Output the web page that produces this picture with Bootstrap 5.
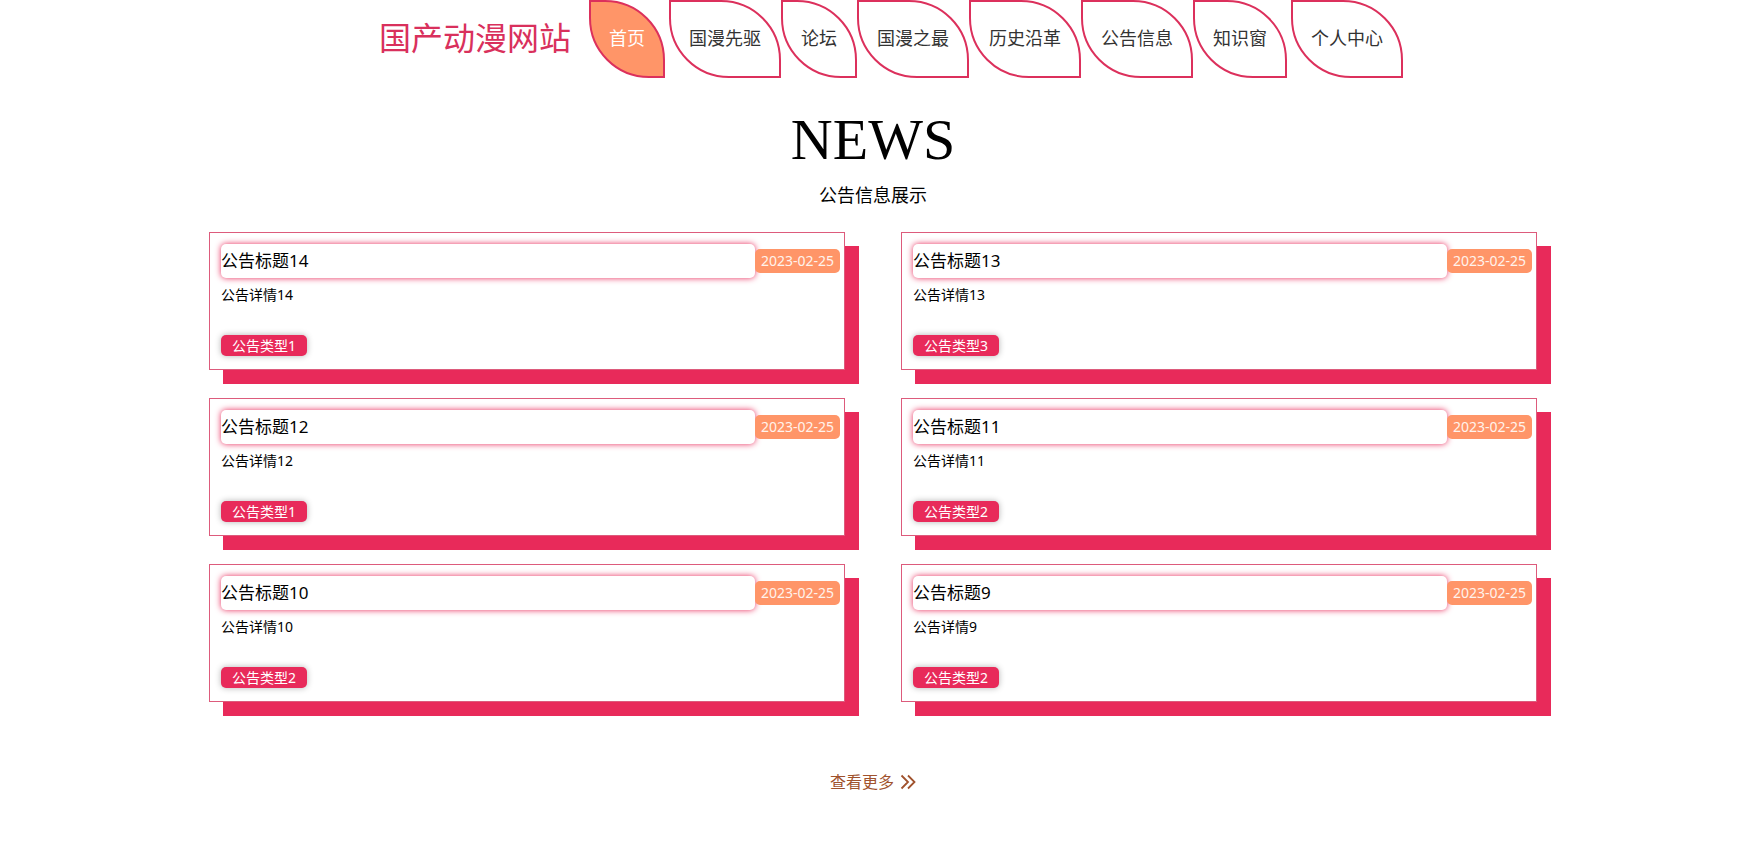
<!DOCTYPE html>
<html lang="zh-CN">
<head>
<meta charset="utf-8">
<meta name="viewport" content="width=device-width, initial-scale=1">
<title>国产动漫网站</title>
<link rel="stylesheet" href="https://cdn.jsdelivr.net/npm/bootstrap@5.3.0/dist/css/bootstrap.min.css">
<style>
:root { --rose: #e82a5a; --peach: #ff9568; }
body { font-family: "Noto Sans", "Noto Sans CJK SC", sans-serif; color: #000; background: #fff; }
.page { padding-right: 17px; }
.brand { color: #d9305c; font-size: 32px; line-height: 76px; padding: 0 18px 0 36px; }
.leaf { border: 2px solid #dc305c; border-radius: 0 60px 0 60px; color: #333; font-size: 18px; line-height: 72px; padding: 0 18px 2px; white-space: nowrap; }
.leaf.active { background: var(--peach); color: #fff; }
.leaf:hover { background: var(--peach); color: #fff; }
.news-head { padding-top: 27px; }
.news-head h1 { font-family: "Liberation Serif", serif; font-size: 58px; line-height: 70px; font-weight: 400; margin-bottom: 6px; }
.news-head p { font-size: 18px; line-height: 28px; }
.news-grid { max-width: 1328px; column-gap: 56px; row-gap: 28px; display: grid; grid-template-columns: repeat(auto-fit, minmax(min(100%, 440px), 1fr)); margin-top: 23px; }
.notice { color: #000; background: #fff; border: 1px solid #dd5b7c; box-shadow: 14px 14px 0 var(--rose); padding: 11px 4px 13px 11px; }
.notice-title { font-size: 17px; line-height: 34px; border-radius: 5px; box-shadow: 0 0 6px var(--rose); }
.notice-date { font-size: 14px; line-height: 24px; padding: 0 6px; border-radius: 5px; background: var(--peach); color: #fff3ec; }
.notice-text { font-size: 14px; line-height: 20px; margin: 7px 0 30px; }
.notice-kind { font-size: 14px; line-height: 21px; padding: 0 11px; border-radius: 5px; background: var(--rose); color: #fff; box-shadow: 0 0 6px rgba(0, 0, 0, .3); }
.more { color: #a0522d; font-size: 16px; line-height: 24px; margin: 68px 0 40px; gap: 6px; }
</style>
</head>
<body>
<div class="page">
  <header>
    <nav class="d-flex flex-wrap justify-content-center">
      <a class="brand text-decoration-none" href="#">国产动漫网站</a>
      <a class="leaf active text-decoration-none me-1" href="#" aria-current="page">首页</a>
      <a class="leaf text-decoration-none" href="#">国漫先驱</a>
      <a class="leaf text-decoration-none" href="#">论坛</a>
      <a class="leaf text-decoration-none" href="#">国漫之最</a>
      <a class="leaf text-decoration-none" href="#">历史沿革</a>
      <a class="leaf text-decoration-none" href="#">公告信息</a>
      <a class="leaf text-decoration-none me-1" href="#">知识窗</a>
      <a class="leaf text-decoration-none" href="#">个人中心</a>
    </nav>
  </header>
  <main>
    <div class="news-head text-center">
      <h1>NEWS</h1>
      <p class="mb-0">公告信息展示</p>
    </div>
    <div class="news-grid mx-auto">
      <a class="notice d-block text-decoration-none" href="#">
        <div class="d-flex align-items-center"><div class="notice-title flex-grow-1">公告标题14</div><div class="notice-date">2023-02-25</div></div>
        <p class="notice-text">公告详情14</p>
        <div class="d-flex"><span class="notice-kind">公告类型1</span></div>
      </a>
      <a class="notice d-block text-decoration-none" href="#">
        <div class="d-flex align-items-center"><div class="notice-title flex-grow-1">公告标题13</div><div class="notice-date">2023-02-25</div></div>
        <p class="notice-text">公告详情13</p>
        <div class="d-flex"><span class="notice-kind">公告类型3</span></div>
      </a>
      <a class="notice d-block text-decoration-none" href="#">
        <div class="d-flex align-items-center"><div class="notice-title flex-grow-1">公告标题12</div><div class="notice-date">2023-02-25</div></div>
        <p class="notice-text">公告详情12</p>
        <div class="d-flex"><span class="notice-kind">公告类型1</span></div>
      </a>
      <a class="notice d-block text-decoration-none" href="#">
        <div class="d-flex align-items-center"><div class="notice-title flex-grow-1">公告标题11</div><div class="notice-date">2023-02-25</div></div>
        <p class="notice-text">公告详情11</p>
        <div class="d-flex"><span class="notice-kind">公告类型2</span></div>
      </a>
      <a class="notice d-block text-decoration-none" href="#">
        <div class="d-flex align-items-center"><div class="notice-title flex-grow-1">公告标题10</div><div class="notice-date">2023-02-25</div></div>
        <p class="notice-text">公告详情10</p>
        <div class="d-flex"><span class="notice-kind">公告类型2</span></div>
      </a>
      <a class="notice d-block text-decoration-none" href="#">
        <div class="d-flex align-items-center"><div class="notice-title flex-grow-1">公告标题9</div><div class="notice-date">2023-02-25</div></div>
        <p class="notice-text">公告详情9</p>
        <div class="d-flex"><span class="notice-kind">公告类型2</span></div>
      </a>
    </div>
    <div class="d-flex justify-content-center">
      <a class="more d-flex align-items-center text-decoration-none" href="#">查看更多
        <svg width="16" height="16" viewBox="0 0 16 16" fill="none" stroke="currentColor" stroke-width="1.8" aria-hidden="true"><path d="M1.500 1.500 8 8l-6.500 6.500M8 1.500 14.500 8 8 14.500"/></svg>
      </a>
    </div>
  </main>
</div>
<script src="https://cdn.jsdelivr.net/npm/bootstrap@5.3.0/dist/js/bootstrap.bundle.min.js"></script>
</body>
</html>
